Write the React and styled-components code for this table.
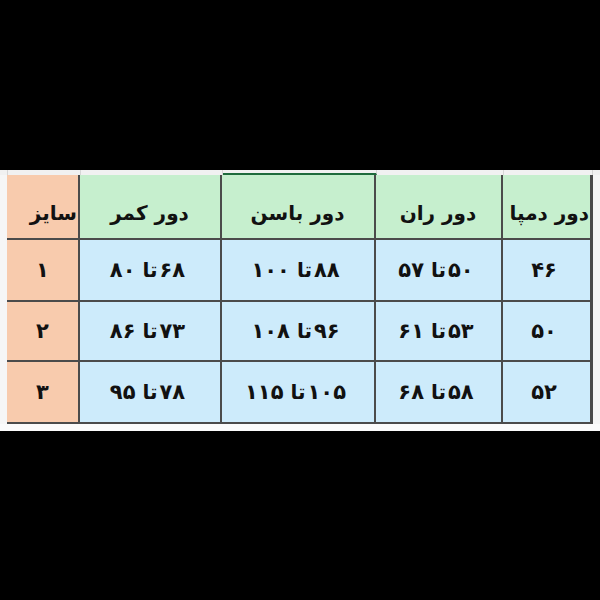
import React from "react";
import styled, { createGlobalStyle } from "styled-components";

const columns = [
  { title: "سایز", width: 71, tone: "size", align: "flex-start" },
  { title: "دور کمر", width: 140, tone: "head" },
  { title: "دور باسن", width: 152, tone: "head", selected: true },
  { title: "دور ران", width: 125, tone: "head" },
  { title: "دور دمپا", width: 87, tone: "head", align: "flex-start" },
];

const rows = [
  { size: "۱", cells: [["۶۸", "۸۰"], ["۸۸", "۱۰۰"], ["۵۰", "۵۷"], ["۴۶"]], height: 60 },
  { size: "۲", cells: [["۷۳", "۸۶"], ["۹۶", "۱۰۸"], ["۵۳", "۶۱"], ["۵۰"]], height: 58 },
  { size: "۳", cells: [["۷۸", "۹۵"], ["۱۰۵", "۱۱۵"], ["۵۸", "۶۸"], ["۵۲"]], height: 60 },
];

const tones = {
  size: "#f8cbad",
  head: "#c6efce",
  data: "#cdebfb",
};

const App = () => {
  return (
    <>
      <GlobalStyle />
      <Page>
        <Sheet>
          <TopStrip>
            <StripCell style={{ width: 8 }} />
            {columns.map((c) => (
              <StripCell key={c.title} selected={c.selected} style={{ width: c.width + 2 }} />
            ))}
          </TopStrip>
          <Body>
            <LeftGutter />
            <Table
              style={{
                gridTemplateColumns: columns.map((c) => c.width + "px").join(" "),
                gridTemplateRows: ["63px", ...rows.map((r) => r.height + "px")].join(" "),
              }}
            >
              {columns.map((c) => (
                <HeadCell key={c.title} tone={c.tone} align={c.align}>
                  {c.title}
                </HeadCell>
              ))}
              {rows.map((r) => (
                <React.Fragment key={r.size}>
                  <Cell tone="size">
                    <Value>
                      <Num solo>{r.size}</Num>
                    </Value>
                  </Cell>
                  {r.cells.map((v, i) => (
                    <Cell key={i} tone="data">
                      <Value>
                        <Num>{v[0]}</Num>
                        {v[1] && (
                          <>
                            <Word>تا</Word>
                            <Num>{v[1]}</Num>
                          </>
                        )}
                      </Value>
                    </Cell>
                  ))}
                </React.Fragment>
              ))}
            </Table>
            <RightGutter />
          </Body>
          <BottomStrip />
        </Sheet>
      </Page>
    </>
  );
};

const GlobalStyle = createGlobalStyle`
  html, body {
    margin: 0;
    padding: 0;
    background: #000;
  }
`;

const Page = styled.div`
  width: 600px;
  height: 600px;
  background: #000;
  display: flex;
  flex-direction: column;
  justify-content: center;
  font-family: "DejaVu Sans", sans-serif;
`;

const Sheet = styled.div`
  width: 600px;
  height: 261px;
  background: #f4f4f4;
  display: flex;
  flex-direction: column;
`;

const TopStrip = styled.div`
  height: 5px;
  display: flex;
  background: #f1f1f1;
`;

const StripCell = styled.div`
  height: 5px;
  box-sizing: border-box;
  border-right: 1px solid #d6d6d6;
  border-bottom: ${(p) => (p.selected ? "2px solid #1e6b3c" : "none")};
`;

const Body = styled.div`
  display: flex;
`;

const LeftGutter = styled.div`
  width: 8px;
  box-sizing: border-box;
  border-right: 1px solid #d8d8d8;
  margin-right: -1px;
  background: #f6f6f6;
`;

const RightGutter = styled.div`
  flex: 1;
  background: #f6f6f6;
`;

const Table = styled.div`
  display: grid;
  gap: 2px;
  background: #4b4b4b;
  padding: 0 3px 2px 0;
`;

const HeadCell = styled.div`
  background: ${(p) => tones[p.tone]};
  display: flex;
  align-items: flex-end;
  justify-content: ${(p) => p.align || "center"};
  padding: 0 1px 13px 0;
  direction: rtl;
  font-size: 20px;
  font-weight: bold;
  color: #111;
  white-space: nowrap;
  overflow: visible;
`;

const Cell = styled.div`
  background: ${(p) => tones[p.tone]};
  display: flex;
  align-items: center;
  justify-content: center;
  font-weight: bold;
  color: #111;
`;

const Value = styled.div`
  direction: rtl;
  display: flex;
  align-items: center;
  gap: 7px;
`;

const Num = styled.span`
  font-size: 21px;
  letter-spacing: ${(p) => (p.solo ? "0" : "5px")};
  margin-left: ${(p) => (p.solo ? "0" : "-5px")};
`;

const Word = styled.span`
  font-size: 20px;
`;

const BottomStrip = styled.div`
  flex: 1;
  background: #fbfbfb;
`;

export default App;
